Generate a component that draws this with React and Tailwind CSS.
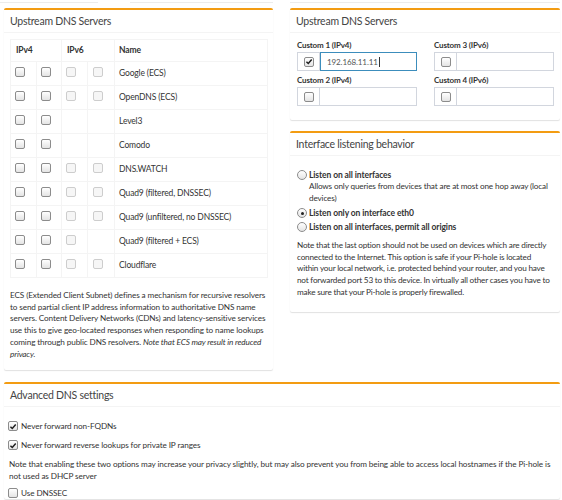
import React from 'react';

const font = { fontFamily: 'Lato, "Liberation Sans", sans-serif' };

function Check({ checked, light }) {
  return (
    <span className={`inline-flex items-center justify-center shrink-0 w-[10px] h-[10px] rounded-[2px] border ${light ? 'border-[#cdcdcd] bg-[#f6f6f6]' : 'border-[#8c8c8c] bg-gradient-to-b from-white to-[#e4e4e4]'}`}>
      {checked && (
        <svg width="9" height="9" viewBox="0 0 10 10">
          <path d="M1.8 5.2 L4.1 7.5 L8.4 2.4" fill="none" stroke="#1e1e1e" strokeWidth="1.8" />
        </svg>
      )}
    </span>
  );
}

function Radio({ on }) {
  return (
    <span className="inline-flex items-center justify-center w-[10px] h-[10px] rounded-full border border-[#8c8c8c] bg-gradient-to-b from-white to-[#e4e4e4] shrink-0">
      {on && <span className="w-[3px] h-[3px] rounded-full bg-[#222]" />}
    </span>
  );
}

function Box({ title, className = '', children }) {
  return (
    <div className={`bg-white border-t-2 border-[#f39c12] rounded-[2px] shadow-[0_1px_1px_rgba(0,0,0,0.12)] ${className}`}>
      <div className="h-[23px] pt-[2px] flex items-center px-[6px] border-b border-[#f4f4f4] text-[10.5px] tracking-[-0.25px] text-[#444]">{title}</div>
      {children}
    </div>
  );
}

const servers = [
  ['Google (ECS)', 4],
  ['OpenDNS (ECS)', 4],
  ['Level3', 2],
  ['Comodo', 2],
  ['DNS.WATCH', 4],
  ['Quad9 (filtered, DNSSEC)', 4],
  ['Quad9 (unfiltered, no DNSSEC)', 4],
  ['Quad9 (filtered + ECS)', 3],
  ['Cloudflare', 4],
];

function CustomField({ label, value, checked, focused }) {
  return (
    <div>
      <div className="h-[14px] flex items-center text-[8px] tracking-[-0.15px] font-bold text-[#333]">{label}</div>
      <div className="flex h-[19px]">
        <div className="w-[23px] flex items-center justify-center border border-[#d2d6de]">
          <Check checked={checked} />
        </div>
        <div className={`flex-1 flex items-center px-[6px] text-[8px] tracking-[-0.1px] text-[#555] border ${focused ? 'border-[#3c8dbc]' : 'border-[#d2d6de] border-l-0'}`}>
          {value}
          {focused && <span className="w-px h-[10px] bg-[#333] ml-px" />}
        </div>
      </div>
    </div>
  );
}

export default function App() {
  return (
    <div style={font} className="w-[562px] h-[500px] overflow-hidden bg-white text-[#333]">
      <div className="h-[3px] flex">
        <div className="w-[98px] border-b border-[#ececec]" />
        <div className="w-[32px]" />
        <div className="w-[143px] border-b border-[#ececec]" />
        <div className="w-[17px]" />
        <div className="w-[270px] border-b border-[#ececec]" />
      </div>
      <div className="pt-[5px] pl-[4px] pr-[2px]">
        <div className="flex gap-[17px] items-start">
          <Box title="Upstream DNS Servers" className="w-[269px]">
            <div className="px-[6px] pt-[6px] pb-[10px]">
              <table className="w-[258px] border-collapse text-[8.5px] tracking-[-0.15px]">
                <thead>
                  <tr className="h-[22px]">
                    <th colSpan={2} className="border border-[#f4f4f4] text-left pl-[5px] font-bold">IPv4</th>
                    <th colSpan={2} className="border border-[#f4f4f4] text-left pl-[5px] font-bold">IPv6</th>
                    <th className="border border-[#f4f4f4] text-left pl-[4px] font-bold">Name</th>
                  </tr>
                </thead>
                <tbody>
                  {servers.map(([name, n]) => (
                    <tr key={name} className="h-[24px]">
                      <td className="w-[26px] border border-[#f4f4f4] pl-[4px] align-middle"><Check /></td>
                      <td className="w-[25px] border border-[#f4f4f4] pl-[4px] align-middle"><Check /></td>
                      <td className="w-[26px] border border-[#f4f4f4] pl-[4px] align-middle">{n > 2 && <Check light />}</td>
                      <td className="w-[27px] border border-[#f4f4f4] pl-[5px] align-middle">{n > 3 && <Check light />}</td>
                      <td className="border border-[#f4f4f4] pl-[4px] align-middle">{name}</td>
                    </tr>
                  ))}
                </tbody>
              </table>
              <p className="mt-[12px] text-[8.2px] tracking-[-0.12px] leading-[11.7px]">
                ECS (Extended Client Subnet) defines a mechanism for recursive resolvers to send partial client IP address information to authoritative DNS name servers. Content Delivery Networks (CDNs) and latency-sensitive services use this to give geo-located responses when responding to name lookups coming through public DNS resolvers. <i>Note that ECS may result in reduced privacy.</i>
              </p>
            </div>
          </Box>
          <div className="w-[270px] flex flex-col gap-[11px]">
            <Box title="Upstream DNS Servers">
              <div className="px-[7px] pt-[5px] pb-[14px] grid grid-cols-2 gap-x-[17px] gap-y-[2px] pr-[6px]">
                <CustomField label="Custom 1 (IPv4)" value="192.168.11.11" checked focused />
                <CustomField label="Custom 3 (IPv6)" />
                <CustomField label="Custom 2 (IPv4)" />
                <CustomField label="Custom 4 (IPv6)" />
              </div>
            </Box>
            <Box title="Interface listening behavior">
              <div className="px-[7px] pt-[13px] pb-[13px] text-[8.2px] tracking-[-0.15px]">
                <div className="flex items-center gap-[2px] h-[12px] font-bold text-[8.5px] tracking-[-0.1px]"><Radio />Listen on all interfaces</div>
                <div className="pl-[12px] leading-[11.5px]">Allows only queries from devices that are at most one hop away (local devices)</div>
                <div className="flex items-center gap-[2px] h-[12px] mt-[3px] font-bold text-[8.5px] tracking-[-0.1px]"><Radio on />Listen only on interface eth0</div>
                <div className="flex items-center gap-[2px] h-[12px] mt-[2px] font-bold text-[8.5px] tracking-[-0.1px]"><Radio />Listen on all interfaces, permit all origins</div>
                <p className="mt-[7px] leading-[11.7px] tracking-[-0.2px]">
                  Note that the last option should not be used on devices which are directly connected to the Internet. This option is safe if your Pi-hole is located within your local network, i.e. protected behind your router, and you have not forwarded port 53 to this device. In virtually all other cases you have to make sure that your Pi-hole is properly firewalled.
                </p>
              </div>
            </Box>
          </div>
        </div>
        <Box title="Advanced DNS settings" className="mt-[12px] w-[556px]">
          <div className="px-[4px] pt-[13px] text-[8.2px] tracking-[-0.1px]">
            <div className="flex items-center gap-[3px] h-[12px]"><Check checked />Never forward non-FQDNs</div>
            <div className="flex items-center gap-[3px] h-[12px] mt-[7px]"><Check checked />Never forward reverse lookups for private IP ranges</div>
            <p className="mt-[8px] px-[1px] leading-[11.5px]">
              Note that enabling these two options may increase your privacy slightly, but may also prevent you from being able to access local hostnames if the Pi-hole is not used as DHCP server
            </p>
            <div className="flex items-center gap-[3px] h-[12px] mt-[5px]"><Check />Use DNSSEC</div>
          </div>
        </Box>
      </div>
    </div>
  );
}
